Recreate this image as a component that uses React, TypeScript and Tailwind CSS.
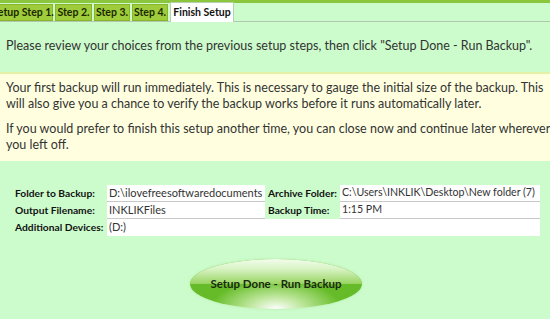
import React from "react";

const font = { fontFamily: 'Lato, "Noto Sans", sans-serif' };

function Tab({ label, active, w, first }: { label: string; active?: boolean; w: string; first?: boolean }) {
  if (active) {
    return (
      <div className={`${w} h-[20px] -mb-px mt-[2px] flex items-center justify-center bg-white border border-b-0 border-[#b8d0b0] text-[10.5px] font-bold text-[#111]`}>
        {label}
      </div>
    );
  }
  return (
    <div
      className={`${w} h-[17px] mt-[4px] flex items-center justify-center bg-[#9fcc3a] border border-[#8ab52a] text-[10.5px] font-bold text-[#1a2a00] whitespace-nowrap ${first ? "-ml-[9px] pl-[2px]" : ""}`}
    >
      {label}
    </div>
  );
}

function Row({ label, value, label2, value2, last }: { label: string; value: string; label2?: string; value2?: string; last?: boolean }) {
  return (
    <div className="flex h-[17px] items-stretch">
      <div className="w-[107px] pl-[15px] flex items-center text-[10.25px] font-bold text-[#111] whitespace-nowrap">{label}</div>
      {label2 !== undefined ? (
        <>
          <div className="w-[158px] bg-white border-b border-[#c8c8c8] flex items-center pl-[2px] text-[11px] text-[#333] whitespace-nowrap overflow-hidden">{value}</div>
          <div className="w-[75px] pl-[3px] flex items-center text-[10.25px] font-bold text-[#111] whitespace-nowrap">{label2}</div>
          <div className="w-[200px] bg-white border-b border-[#c8c8c8] flex items-center pl-[2px] text-[10.6px] text-[#333] whitespace-nowrap overflow-hidden">{value2}</div>
        </>
      ) : (
        <div className={`w-[433px] bg-white flex items-center pl-[2px] text-[11px] text-[#333] ${last ? "" : "border-b border-[#c8c8c8]"}`}>{value}</div>
      )}
    </div>
  );
}

export default function App() {
  return (
    <div className="w-[550px] h-[319px] bg-[#ccfccc] overflow-hidden" style={font}>
      <div className="h-[3px] bg-[#8cc63e]" />
      <div className="flex items-end gap-[2px] border-b border-[#b0c8b0] h-[19px]">
        <Tab label="Setup Step 1." w="w-[62px]" first />
        <Tab label="Step 2." w="w-[37px]" />
        <Tab label="Step 3." w="w-[36px]" />
        <Tab label="Step 4." w="w-[36px]" />
        <Tab label="Finish Setup" w="w-[64px]" active />
      </div>
      <div className="pl-[6px] pt-[16px] text-[12.5px] text-[#333] leading-[16px] whitespace-nowrap">
        Please review your choices from the previous setup steps, then click "Setup Done - Run Backup".
      </div>
      <div className="mt-[18px] bg-[#ffffe0] border-t-2 border-[#e4f2a8] px-[6px] pt-[6px] text-[12.5px] text-[#333] leading-[16px] h-[89px]">
        <p className="whitespace-nowrap">Your first backup will run immediately. This is necessary to gauge the initial size of the backup. This</p>
        <p className="whitespace-nowrap">will also give you a chance to verify the backup works before it runs automatically later.</p>
        <p className="whitespace-nowrap mt-[9px]">If you would prefer to finish this setup another time, you can close now and continue later wherever</p>
        <p className="whitespace-nowrap">you left off.</p>
      </div>
      <div className="mt-[24px] flex flex-col">
        <Row label="Folder to Backup:" value="D:\ilovefreesoftwaredocuments" label2="Archive Folder:" value2="C:\Users\INKLIK\Desktop\New folder (7)" />
        <Row label="Output Filename:" value="INKLIKFiles" label2="Backup Time:" value2="1:15 PM" />
        <Row label="Additional Devices:" value="(D:)" last />
      </div>
      <div className="flex justify-center mt-[23px]">
        <div
          className="relative w-[172px] h-[50px] rounded-[50%] overflow-hidden flex items-center justify-center ml-[2px]"
          style={{
            background:
              "radial-gradient(ellipse 38% 60% at 50% 100%, #ffffff 0%, #b8e494 45%, #66bc28 100%)",
            boxShadow: "0 0 3px rgba(140,200,100,0.35)",
          }}
        >
          <div
            className="absolute left-0 top-0 w-full h-1/2"
            style={{
              background:
                "linear-gradient(to bottom, #f2fdec 0%, #d8f3c4 40%, #98d460 100%)",
            }}
          />
          <span className="relative text-[11.5px] font-bold text-[#1a2a10]">Setup Done - Run Backup</span>
        </div>
      </div>
    </div>
  );
}
